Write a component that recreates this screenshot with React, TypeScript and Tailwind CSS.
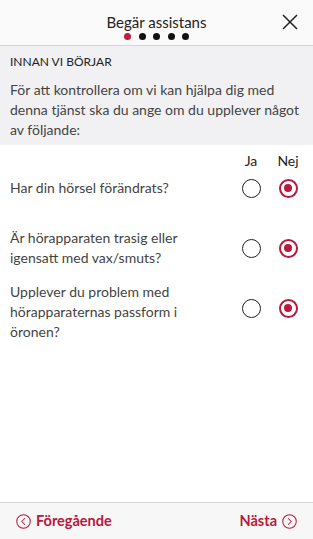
import { useState } from "react";

const questions = [
  { id: "q1", text: "Har din hörsel förändrats?" },
  { id: "q2", text: "Är hörapparaten trasig eller igensatt med vax/smuts?" },
  { id: "q3", text: "Upplever du problem med hörapparaternas passform i öronen?" },
];

function Radio({ checked, onClick }: { checked: boolean; onClick: () => void }) {
  return (
    <button onClick={onClick} className="flex h-[22px] w-[22px] items-center justify-center">
      {checked ? (
        <span className="flex h-[19px] w-[19px] items-center justify-center rounded-full border-[2.5px] border-[#b8193c]">
          <span className="h-[8px] w-[8px] rounded-full bg-[#b8193c]" />
        </span>
      ) : (
        <span className="h-[19px] w-[19px] rounded-full border-[1.5px] border-[#222]" />
      )}
    </button>
  );
}

function CircleChevron({ dir }: { dir: "left" | "right" }) {
  return (
    <svg width="15" height="15" viewBox="0 0 16 16" fill="none" stroke="#b8193c" strokeWidth="1.1">
      <circle cx="8" cy="8" r="7.2" />
      {dir === "left" ? (
        <path d="M9.3 4.8 6.1 8l3.2 3.2" strokeLinecap="round" strokeLinejoin="round" />
      ) : (
        <path d="M6.7 4.8 9.9 8l-3.2 3.2" strokeLinecap="round" strokeLinejoin="round" />
      )}
    </svg>
  );
}

export default function App() {
  const [answers, setAnswers] = useState<Record<string, "ja" | "nej">>({
    q1: "nej",
    q2: "nej",
    q3: "nej",
  });

  return (
    <div className="flex h-[539px] w-[313px] flex-col bg-white font-['Lato',sans-serif] text-[#333]">
      <header className="relative flex h-[46px] shrink-0 flex-col items-center border-b border-[#d4d4d4] bg-[#fafafa] pt-[12px]">
        <h1 className="text-[15px] leading-[20px] text-[#222]">Begär assistans</h1>
        <div className="mt-[1px] flex gap-[7.5px]">
          {[0, 1, 2, 3, 4].map((i) => (
            <span
              key={i}
              className={i === 0 ? "h-[7px] w-[7px] rounded-full bg-[#c0203e]" : "h-[7px] w-[7px] rounded-full bg-[#111]"}
            />
          ))}
        </div>
        <button className="absolute right-[15px] top-[14px]">
          <svg width="16" height="16" viewBox="0 0 16 16" stroke="#222" strokeWidth="1.5">
            <path d="M1 1l14 14M15 1 1 15" />
          </svg>
        </button>
      </header>

      <section className="shrink-0 bg-[#f1f1f3] px-[10px] pb-[5px] pt-[8px]">
        <h2 className="text-[12px] leading-[16px] text-[#222]">INNAN VI BÖRJAR</h2>
        <p className="mt-[10px] text-[14px] leading-[20px] text-[#444]">
          För att kontrollera om vi kan hjälpa dig med denna tjänst ska du ange om du upplever något av följande:
        </p>
      </section>

      <main className="flex-1 pl-[10px] pr-[14px]">
        <div className="flex h-[13px] items-start justify-end gap-[15px] pt-[7px] text-[14px] leading-[18px] text-[#222]">
          <span className="w-[22px] text-center">Ja</span>
          <span className="w-[22px] text-center">Nej</span>
        </div>
        {questions.map((q, i) => (
          <div key={q.id} className="flex h-[60px] items-center">
            <p className={`flex-1 pr-[40px] text-[14px] leading-[20px] text-[#444] ${i === 2 ? "mt-[8px]" : ""}`}>{q.text}</p>
            <div className="flex gap-[15px]">
              <Radio checked={answers[q.id] === "ja"} onClick={() => setAnswers({ ...answers, [q.id]: "ja" })} />
              <Radio checked={answers[q.id] === "nej"} onClick={() => setAnswers({ ...answers, [q.id]: "nej" })} />
            </div>
          </div>
        ))}
      </main>

      <footer className="flex h-[37px] shrink-0 items-center justify-between border-t border-[#d4d4d4] bg-[#f7f7f7] px-[16px]">
        <button className="flex items-center gap-[5px] text-[14.5px] font-bold text-[#b8193c]">
          <CircleChevron dir="left" />
          Föregående
        </button>
        <button className="flex items-center gap-[5px] text-[14.5px] font-bold text-[#b8193c]">
          Nästa
          <CircleChevron dir="right" />
        </button>
      </footer>
    </div>
  );
}
